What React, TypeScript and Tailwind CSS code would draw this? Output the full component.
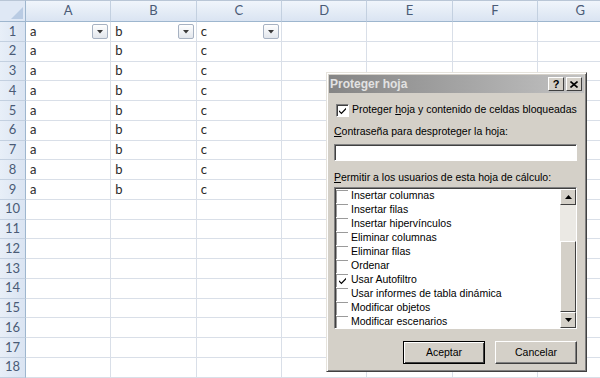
const COLS = ["A", "B", "C", "D", "E", "F", "G"];
const ROWS = Array.from({ length: 18 }, (_, i) => i + 1);

const ITEMS = [
  { label: "Insertar columnas", checked: false },
  { label: "Insertar filas", checked: false },
  { label: "Insertar hipervínculos", checked: false },
  { label: "Eliminar columnas", checked: false },
  { label: "Eliminar filas", checked: false },
  { label: "Ordenar", checked: false },
  { label: "Usar Autofiltro", checked: true },
  { label: "Usar informes de tabla dinámica", checked: false },
  { label: "Modificar objetos", checked: false },
  { label: "Modificar escenarios", checked: false },
];

const Check = () => (
  <svg width="9" height="9" viewBox="0 0 9 9">
    <path d="M1 4.2 L3.4 6.6 L8 1.8 L8 3.4 L3.4 8.2 L1 5.8 Z" fill="#000" />
  </svg>
);

const FilterButton = () => (
  <div className="absolute right-[2px] top-[2px] w-[16px] h-[15px] rounded-[2px] border border-[#a7b2c2] bg-gradient-to-b from-[#ffffff] to-[#e2e6ec] flex items-center justify-center">
    <svg width="6" height="4" viewBox="0 0 6 4">
      <path d="M0 0 L6 0 L3 3.5 Z" fill="#3a3a3a" />
    </svg>
  </div>
);

const Sheet = () => (
  <div className="grid grid-cols-[26px_repeat(7,85.33px)] grid-rows-[22px_repeat(18,19.75px)] font-['Lato','Liberation_Sans',sans-serif] text-[13px]">
    <div className="relative bg-[#dfe8f5] border-r border-b border-[#9eb6ce] border-t border-t-[#b9c6d6]">
      <svg className="absolute right-[2px] bottom-[2px]" width="12" height="12" viewBox="0 0 12 12">
        <path d="M12 0 L12 12 L0 12 Z" fill="#b9cbe3" />
      </svg>
    </div>
    {COLS.map((c) => (
      <div
        key={c}
        className="flex items-center justify-center bg-gradient-to-b from-[#f0f5fb] to-[#dae4f2] border-r border-r-[#c3d0e0] border-b border-b-[#9eb6ce] border-t border-t-[#b9c6d6] text-[#4a5b76]"
      >
        {c}
      </div>
    ))}
    {ROWS.map((r) => (
      <>
        <div
          key={"h" + r}
          className="flex items-center justify-center bg-gradient-to-r from-[#e8eff8] to-[#dae4f2] border-r border-r-[#9eb6ce] border-b border-b-[#c3d0e0] text-[#4a5b76]"
        >
          {r}
        </div>
        {COLS.map((c, ci) => (
          <div
            key={c + r}
            className="relative flex items-center pl-[4px] border-r border-b border-[#d9dfe8] text-[#2a2a2a] bg-white"
          >
            {r <= 9 && ci < 3 ? ["a", "b", "c"][ci] : ""}
            {r === 1 && ci < 3 && <FilterButton />}
          </div>
        ))}
      </>
    ))}
  </div>
);

const Dialog = () => (
  <div className="absolute left-[326px] top-[72px] w-[261px] h-[300px] bg-[#d4d0c8] border border-t-[#e6e3dc] border-l-[#e6e3dc] border-r-[#404040] border-b-[#404040] shadow-[inset_1px_1px_0_#ffffff,inset_-1px_-1px_0_#808080] p-[2px] font-['Liberation_Sans',Arial,sans-serif] text-[10.5px] text-black flex flex-col whitespace-nowrap">
    <div className="h-[18px] flex items-center justify-between bg-gradient-to-r from-[#858585] to-[#c2c2c2] pl-[1px] pr-[2px]">
      <span className="font-bold text-[12px] text-[#e2e2e2]">Proteger hoja</span>
      <div className="flex gap-[2px]">
        <div className="w-[16px] h-[14px] bg-[#d4d0c8] border border-t-white border-l-white border-r-[#404040] border-b-[#404040] flex items-center justify-center font-bold text-[11px] leading-none">
          ?
        </div>
        <div className="w-[16px] h-[14px] bg-[#d4d0c8] border border-t-white border-l-white border-r-[#404040] border-b-[#404040] flex items-center justify-center">
          <svg width="8" height="7" viewBox="0 0 8 7">
            <path d="M0.5 0.5 L7.5 6.5 M7.5 0.5 L0.5 6.5" stroke="#000" strokeWidth="1.6" />
          </svg>
        </div>
      </div>
    </div>
    <div className="flex flex-col pl-[5px] pr-[7px]">
      <div className="mt-[10px] h-[14px] flex items-center pl-[2px]">
        <div className="w-[13px] h-[13px] bg-white border border-t-[#808080] border-l-[#808080] border-r-white border-b-white shadow-[inset_1px_1px_0_#404040] flex items-center justify-center shrink-0">
          <Check />
        </div>
        <span className="ml-[3px]">
          Proteger <u>h</u>oja y contenido de celdas bloqueadas
        </span>
      </div>
      <div className="mt-[8px] h-[14px] flex items-center">
        <span>
          <u>C</u>ontraseña para desproteger la hoja:
        </span>
      </div>
      <div className="mt-[5px] h-[17px] bg-white border border-t-[#808080] border-l-[#808080] border-r-white border-b-white shadow-[inset_1px_1px_0_#404040]" />
      <div className="mt-[10px] h-[14px] flex items-center">
        <span>
          <u>P</u>ermitir a los usuarios de esta hoja de cálculo:
        </span>
      </div>
      <div className="mt-[2px] h-[142px] flex bg-white border border-t-[#808080] border-l-[#808080] border-r-white border-b-white shadow-[inset_1px_1px_0_#404040] pt-[1px] pl-[1px]">
        <div className="flex-1 flex flex-col overflow-hidden">
          {ITEMS.map((it) => (
            <div key={it.label} className="h-[14px] flex items-center shrink-0">
              <div className="w-[12px] h-[13px] bg-white border-l border-t border-[#9a9a9a] flex items-center justify-center shrink-0">
                {it.checked && <Check />}
              </div>
              <span className="ml-[3px]">{it.label}</span>
            </div>
          ))}
        </div>
        <div className="w-[16px] flex flex-col">
          <div className="h-[16px] bg-[#d4d0c8] border border-t-white border-l-white border-r-[#404040] border-b-[#404040] flex items-center justify-center">
            <svg width="7" height="4" viewBox="0 0 7 4">
              <path d="M0 4 L7 4 L3.5 0 Z" fill="#000" />
            </svg>
          </div>
          <div className="h-[36px] bg-[#ebe9e4]" />
          <div className="flex-1 bg-[#d4d0c8] border border-t-white border-l-white border-r-[#404040] border-b-[#404040]" />
          <div className="h-[16px] bg-[#d4d0c8] border border-t-white border-l-white border-r-[#404040] border-b-[#404040] flex items-center justify-center">
            <svg width="7" height="4" viewBox="0 0 7 4">
              <path d="M0 0 L7 0 L3.5 4 Z" fill="#000" />
            </svg>
          </div>
        </div>
      </div>
      <div className="mt-[12px] flex justify-end gap-[10px]">
        <div className="w-[82px] h-[23px] bg-[#d4d0c8] border border-black shadow-[inset_1px_1px_0_#ffffff,inset_-1px_-1px_0_#404040] flex items-center justify-center">
          Aceptar
        </div>
        <div className="w-[82px] h-[23px] bg-[#d4d0c8] border border-t-white border-l-white border-r-[#404040] border-b-[#404040] shadow-[inset_-1px_-1px_0_#808080] flex items-center justify-center">
          Cancelar
        </div>
      </div>
    </div>
  </div>
);

export default function App() {
  return (
    <div className="relative w-[600px] h-[378px] overflow-hidden bg-white">
      <Sheet />
      <Dialog />
    </div>
  );
}
